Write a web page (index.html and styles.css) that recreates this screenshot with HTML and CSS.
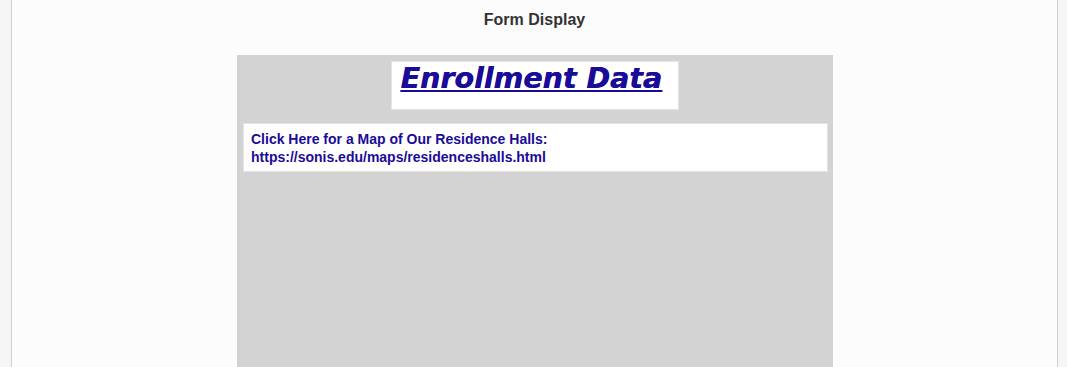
FILE: index.html
```html
<!DOCTYPE html>
<html lang="en">
<head>
    <meta charset="UTF-8">
    <title>Form Display</title>
    <link rel="stylesheet" href="styles.css">
</head>
<body>
    <div class="page">
        <h1 class="page-title">Form Display</h1>

        <div class="form-area">
            <div class="form-heading">
                <a href="#">Enrollment Data</a>
            </div>

            <div class="form-link">
                <a href="#">Click Here for a Map of Our Residence Halls:<br>https://sonis.edu/maps/residenceshalls.html</a>
            </div>
        </div>
    </div>
</body>
</html>
```

FILE: styles.css
```css
* { margin: 0; padding: 0; box-sizing: border-box; }

body {
    font-family: 'Liberation Sans', Arial, sans-serif;
    background: #f5f5f5;
    color: #333;
    height: 100vh;
    overflow: hidden;
}

.page {
    margin: 0 9px 0 11px;
    min-height: 100vh;
    background: #fcfcfc;
    border-left: 1px solid #d0d0d0;
    border-right: 1px solid #d0d0d0;
}

.page-title {
    padding-top: 11px;
    height: 54px;
    text-align: center;
    font-size: 16px;
    font-weight: bold;
    color: #333;
}

.form-area {
    width: 597px;
    min-height: 320px;
    margin: 0 auto;
    padding: 6px 5px 20px 6px;
    background: #d3d3d3;
    border-top: 1px solid #fff;
    border-left: 1px solid #fff;
}

.form-heading {
    width: 288px;
    height: 49px;
    margin: 0 auto 13px;
    padding: 0 0 0 9px;
    position: relative;
    left: -1px;
    background: #fff;
    border: 1px solid #e4e4e4;
}

.form-heading a {
    font-family: 'DejaVu Sans', Verdana, sans-serif;
    font-size: 28.5px;
    font-weight: bold;
    font-style: italic;
    line-height: 34px;
    color: #1a0b99;
    text-shadow: 0.4px 0 0 #1a0b99;
}

.form-link {
    height: 49px;
    padding: 6px 7px;
    background: #fff;
    border: 1px solid #e4e4e4;
}

.form-link a {
    font-size: 14px;
    font-weight: bold;
    line-height: 17px;
    color: #1a0b99;
    text-decoration: none;
}
```
